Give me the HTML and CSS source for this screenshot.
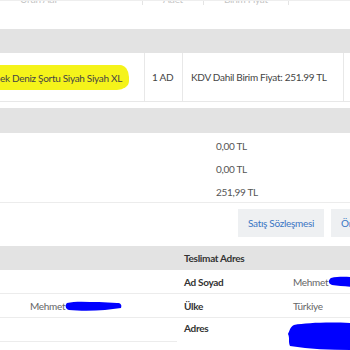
FILE: index.html
```html
<!DOCTYPE html>
<html lang="tr">
<head>
  <meta charset="UTF-8">
  <title>Sipariş Detayı</title>
  <link rel="stylesheet" href="styles.css">
</head>
<body>
  <div class="page">
    <!-- önceki tablo başlığı (kesik) -->
    <div class="cut-row">
      <div class="cut-inner">
        <span class="cut-cell first">Ürün Adı</span>
        <span class="cut-cell">Adet</span>
        <span class="cut-cell">Birim Fiyat</span>
      </div>
    </div>

    <div class="bar"></div>
    <div class="product-row">
      <div class="cell name"><span class="marker">ek Deniz Şortu Siyah Siyah XL</span></div>
      <div class="cell qty">1 AD</div>
      <div class="cell price">KDV Dahil Birim Fiyat: 251.99 TL</div>
      <div class="cell rest"></div>
    </div>

    <div class="bar second"></div>
    <div class="totals">
      <div class="total-line">0,00 TL</div>
      <div class="total-line">0,00 TL</div>
      <div class="total-line">251,99 TL</div>
    </div>

    <div class="actions">
      <button class="btn">Satış Sözleşmesi</button>
      <button class="btn">Ön Bilgilendirme</button>
    </div>

    <!-- adres tabloları -->
    <div class="address">
      <div class="addr-table left">
        <div class="addr-head"></div>
        <div class="addr-row"></div>
        <div class="addr-row"><span class="val indent">Mehmet</span><svg class="scribble" width="58" height="12" viewBox="0 0 58 12"><path d="M2 3 C10 1 22 2 34 2 L52 3 C56 3 57 5 56 8 L40 10 C28 11 14 11 4 10 C0 9 0 5 2 3 Z" fill="#0000ff"/></svg></div>
        <div class="addr-row"></div>
      </div>
      <div class="addr-table right">
        <div class="addr-head"><b>Teslimat Adres</b></div>
        <div class="addr-row"><b class="label">Ad Soyad</b><span class="val">Mehmet</span><svg class="scribble" width="32" height="12" viewBox="0 0 32 12"><path d="M3 2 C12 0 24 1 32 2 L32 11 C22 11 12 10 4 9 C0 8 0 4 3 2 Z" fill="#0000ff"/></svg></div>
        <div class="addr-row"><b class="label">Ülke</b><span class="val">Türkiye</span></div>
        <div class="addr-row tall"><b class="label">Adres</b><svg class="blob" width="64" height="28" viewBox="0 0 64 28"><path d="M8 3 C20 1 40 0 64 1 L64 28 C44 28 24 27 4 24 C2 20 4 16 2 12 C4 8 4 5 8 3 Z" fill="#0000ff"/></svg></div>
      </div>
    </div>
  </div>
</body>
</html>
```

FILE: styles.css
```css
/* sipariş detayı */
body {
  margin: 0;
  background: #fff;
  font-family: 'Lato', 'Noto Sans', sans-serif;
  font-size: 10px;
  letter-spacing: -0.3px;
  color: #555;
}
.page {
  width: 350px;
  overflow: hidden;
}
.cut-row {
  height: 6px;
  overflow: hidden;
  border-top: 1px solid #eee;
}
.cut-inner {
  display: flex;
  margin-top: -8px;
  color: #c4c4c4;
}
.cut-cell {
  padding: 0 20px;
  border-right: 1px solid #e4e4e4;
}
.cut-cell.first {
  width: 102px;
}
.bar {
  height: 24px;
  margin-top: 22px;
  background-color: #e3e3e3;
}
.bar.second {
  margin-top: 6px;
  height: 25px;
}
.product-row {
  display: flex;
  height: 48px;
  border-bottom: 1px solid #e8e8e8;
}
.cell {
  display: flex;
  align-items: center;
  flex: none;
  border-right: 1px solid #e8e8e8;
  color: #444;
}
.cell.name {
  width: 144px;
}
.cell.qty {
  width: 30px;
  padding-left: 7px;
}
.cell.price {
  width: 152px;
  padding-left: 8px;
}
.cell.rest {
  flex: 1;
  border-right: none;
}
.marker {
  background-color: #f5f31a;
  padding: 7px 7px 6px 0;
  border-radius: 0 9px 12px 0 / 0 12px 9px 0;
  white-space: nowrap;
}
.totals {
  padding: 2px 0 0 216px;
  height: 67px;
  border-bottom: 1px solid #ececec;
}
.total-line {
  height: 23px;
  line-height: 23px;
  color: #555;
}
.actions {
  display: flex;
  gap: 7px;
  padding: 6px 0 0 238px;
  height: 37px;
  white-space: nowrap;
}
.btn {
  flex: none;
  height: 28px;
  padding: 0 10px;
  border: none;
  background-color: #eef0f2;
  color: #3a76c4;
  font-family: inherit;
  font-size: 10px;
  letter-spacing: -0.3px;
}
.address {
  display: flex;
}
.addr-table.left {
  flex: none;
  width: 177px;
}
.addr-table.right {
  flex: 1;
  min-width: 0;
}
.addr-head {
  height: 24px;
  line-height: 24px;
  background-color: #e3e3e3;
  padding-left: 7px;
  color: #333;
}
.addr-row {
  display: flex;
  align-items: center;
  height: 23px;
  border-bottom: 1px solid #ececec;
}
.addr-row.tall {
  height: 30px;
  border-bottom: none;
  align-items: flex-start;
  padding-top: 4px;
}
.label {
  flex: none;
  width: 109px;
  padding-left: 7px;
  color: #333;
}
.val {
  color: #666;
}
.val.indent {
  padding-left: 30px;
}
.scribble {
  display: block;
  flex: none;
}
.blob {
  flex: none;
  margin-left: -7px;
}
```
